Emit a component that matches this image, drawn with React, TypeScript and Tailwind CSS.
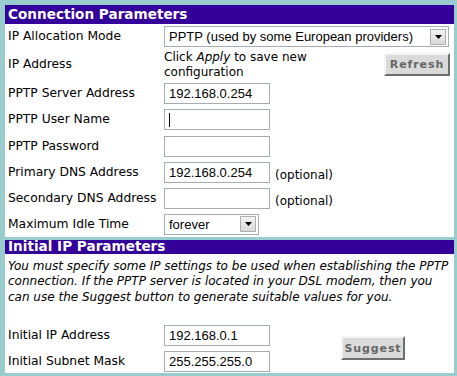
import React from "react";

const font = { fontFamily: '"DejaVu Sans", Verdana, sans-serif' };
const inFont = { fontFamily: '"Liberation Sans", Arial, sans-serif' };

function TextBox({ value, cursor, w = "w-[106px]" }: { value?: string; cursor?: boolean; w?: string }) {
  return (
    <div
      className={`relative ${w} h-[21px] border border-[#a5acb2] bg-white flex items-center pl-[4px] text-[13px] text-black leading-none whitespace-nowrap`}
      style={inFont}
    >
      {value}
      {cursor && <div className="absolute left-[4px] top-[3px] w-px h-[14px] bg-black" />}
    </div>
  );
}

function Arrow() {
  return (
    <div className="w-[16px] h-[16px] mr-[2px] border border-[#b0b0b0] bg-gradient-to-b from-[#f4f4f4] to-[#d8d8d8] flex items-center justify-center">
      <svg width="7" height="4" viewBox="0 0 7 4">
        <path d="M0 0H7L3.5 4Z" fill="#000" />
      </svg>
    </div>
  );
}

function Select({ value, w }: { value: string; w: string }) {
  return (
    <div
      className={`${w} h-[21px] border border-[#a5acb2] bg-white flex items-center justify-between text-[13px] text-black leading-none whitespace-nowrap`}
      style={inFont}
    >
      <span className="pl-[4px]">{value}</span>
      <Arrow />
    </div>
  );
}

function Btn({ label, cls }: { label: string; cls: string }) {
  return (
    <div
      className={`${cls} bg-[#dadada] border-t-2 border-l-2 border-t-[#f4f4f4] border-l-[#f4f4f4] border-b-2 border-r-2 border-b-[#6e6e6e] border-r-[#6e6e6e] flex items-center justify-center text-[11px] font-bold text-[#666] tracking-[0.9px] leading-none`}
    >
      {label}
    </div>
  );
}

function Row({ label, h, children }: { label: string; h: string; children?: React.ReactNode }) {
  return (
    <div className={`flex items-center ${h}`}>
      <div className="w-[159px] pl-[3px] text-[12.3px] text-black leading-none whitespace-nowrap">{label}</div>
      {children}
    </div>
  );
}

export default function App() {
  return (
    <div className="w-[457px] h-[376px] bg-[#99cccc] pt-[5px] pl-[5px] pr-[3px]" style={font}>
      <div className="bg-white h-[232px] flex flex-col">
        <div className="h-[19px] bg-[#330099] text-white font-bold text-[13.6px] leading-none flex items-center pl-[3px]">
          Connection Parameters
        </div>
        <Row label="IP Allocation Mode" h="h-[25px]">
          <Select value="PPTP (used by some European providers)" w="w-[285px]" />
        </Row>
        <div className="flex items-center h-[31px]">
          <div className="w-[159px] pl-[3px] text-[12.3px] text-black leading-none">IP Address</div>
          <div className="flex-1 flex items-center justify-between pr-[4px]">
            <div className="text-[12px] leading-[15px] text-black whitespace-nowrap">
              Click <i>Apply</i> to save new
              <br />
              configuration
            </div>
            <Btn label="Refresh" cls="w-[66px] h-[23px]" />
          </div>
        </div>
        <Row label="PPTP Server Address" h="h-[26px]">
          <TextBox value="192.168.0.254" />
        </Row>
        <Row label="PPTP User Name" h="h-[27px]">
          <TextBox cursor />
        </Row>
        <Row label="PPTP Password" h="h-[26px]">
          <TextBox />
        </Row>
        <Row label="Primary DNS Address" h="h-[26px]">
          <TextBox value="192.168.0.254" />
          <span className="ml-[5px] mt-[6px] text-[12px] leading-none text-black">(optional)</span>
        </Row>
        <Row label="Secondary DNS Address" h="h-[26px]">
          <TextBox />
          <span className="ml-[5px] mt-[6px] text-[12px] leading-none text-black">(optional)</span>
        </Row>
        <Row label="Maximum Idle Time" h="h-[26px]">
          <Select value="forever" w="w-[95px]" />
        </Row>
      </div>
      <div className="h-[3px]" />
      <div className="bg-white h-[133px] flex flex-col">
        <div className="h-[19px] bg-[#330099] text-white font-bold text-[13.6px] leading-none flex items-center pl-[3px]">
          Initial IP Parameters
        </div>
        <div className="pl-[3px] pt-[5px] text-[12px] italic leading-[15.5px] text-black whitespace-nowrap">
          You must specify some IP settings to be used when establishing the PPTP
          <br />
          connection. If the PPTP server is located in your DSL modem, then you
          <br />
          can use the Suggest button to generate suitable values for you.
        </div>
        <div className="flex mt-[17px]">
          <div className="flex flex-col">
            <Row label="Initial IP Address" h="h-[26px]">
              <TextBox value="192.168.0.1" />
            </Row>
            <Row label="Initial Subnet Mask" h="h-[26px]">
              <TextBox value="255.255.255.0" />
            </Row>
          </div>
          <div className="flex items-center ml-[71px]">
            <Btn label="Suggest" cls="w-[64px] h-[24px]" />
          </div>
        </div>
      </div>
    </div>
  );
}
